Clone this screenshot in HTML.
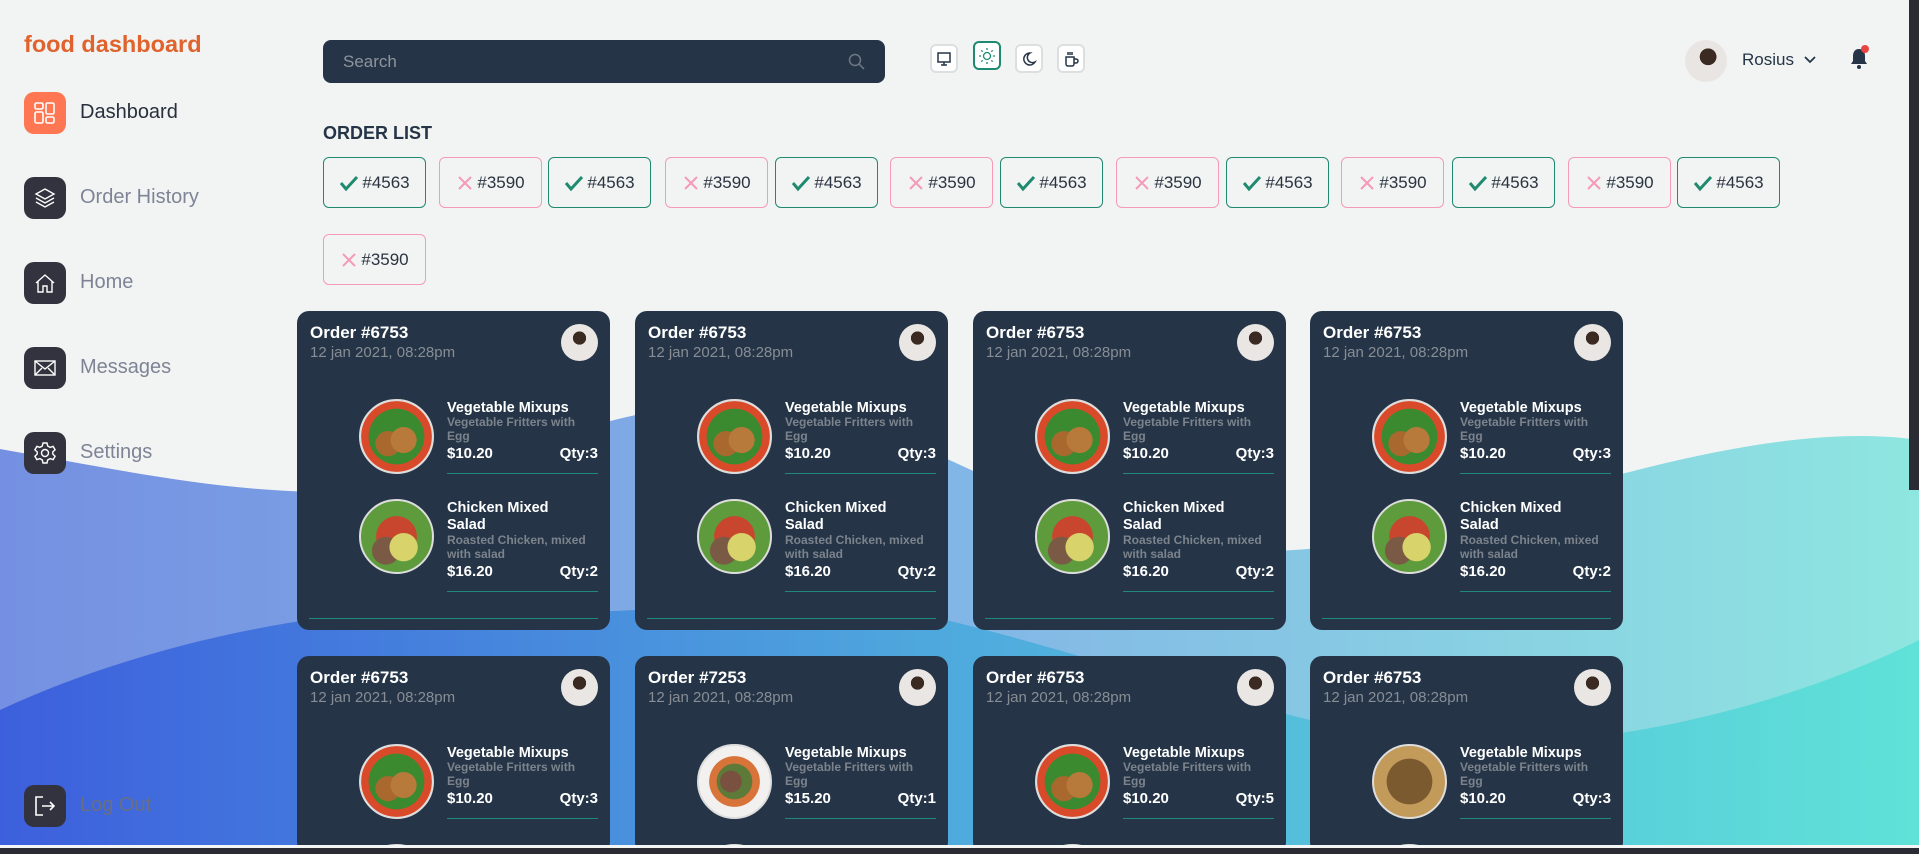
<!DOCTYPE html>
<html><head><meta charset="utf-8">
<style>
*{margin:0;padding:0;box-sizing:border-box}
html,body{width:1919px;height:854px;overflow:hidden}
body{background:#f2f4f3;font-family:"Liberation Sans",sans-serif;position:relative}
.abs{position:absolute}
.title{left:24px;top:31px;font-size:23.5px;font-weight:bold;color:#e0622c}
.nav{position:absolute;left:24px;width:42px;height:42px;border-radius:10px;background:#33333f;display:flex;align-items:center;justify-content:center}
.navt{position:absolute;left:80px;font-size:20px;color:#7e8496}
.search{left:323px;top:40px;width:562px;height:43px;border-radius:8px;background:#253547}
.search span{position:absolute;left:20px;top:12px;color:#8d949c;font-size:17px}
.ti{position:absolute;top:44px;width:28px;height:29px;border:2px solid #dcdfe0;border-radius:6px;background:#fff;display:flex;align-items:center;justify-content:center}
.chip{position:absolute;width:103px;height:51px;border-radius:6px;border:1.5px solid #1f8a70;display:flex;align-items:center;justify-content:center;font-size:17px;color:#2a3340;gap:3px}
.chip.x{border-color:#f59ab8}
.card{position:absolute;width:313px;height:319px;border-radius:12px;background:#253547;color:#fff;overflow:hidden}
.card .o{position:absolute;left:13px;top:12px;font-size:17px;font-weight:bold}
.card .d{position:absolute;left:13px;top:33px;font-size:15px;color:#878d95}
.card .av{position:absolute;right:12px;top:13px;width:37px;height:37px;border-radius:50%;background:radial-gradient(circle at 50% 38%,#3a2a22 0 22%,#e9e6e4 23% 100%)}
.food{position:absolute;left:62px;width:75px;height:75px;border-radius:50%;border:2px solid #ddd}
.f1{background:radial-gradient(circle at 60% 55%,#b87a3a 0 22%,transparent 23%),radial-gradient(circle at 38% 60%,#a8682e 0 20%,transparent 21%),radial-gradient(circle,#3c8a2f 0 55%,#d94a2a 56% 70%,#f1f1f1 71%)}
.f2{background:radial-gradient(circle at 60% 65%,#d8d36a 0 22%,transparent 23%),radial-gradient(circle at 35% 70%,#7a5a44 0 20%,transparent 21%),radial-gradient(circle,#c8452e 0 40%,#5d9b3c 41% 72%,#555 73%)}
.f3{background:radial-gradient(circle at 45% 50%,#7a5040 0 20%,transparent 21%),radial-gradient(circle,#5d7a38 0 35%,#d8733a 36% 50%,#f3f1ef 51%)}
.f4{background:radial-gradient(circle,#7a5a2e 0 45%,#c29a5a 46% 80%,#eee 81%)}
.n{position:absolute;left:150px;font-size:14.5px;font-weight:bold;line-height:17px;width:126px}
.s{position:absolute;left:150px;font-size:12px;color:#7c838c;line-height:14px;width:140px;font-weight:bold}
.p{position:absolute;left:150px;font-size:15px;font-weight:bold}
.q{position:absolute;right:12px;font-size:15px;font-weight:bold}
.l{position:absolute;left:150px;right:12px;height:1px;background:#1f8a7a}
.bl{position:absolute;left:12px;right:12px;top:307px;height:1px;background:#1f8a7a}
#bot{position:absolute;left:0;top:845px;width:1919px;height:9px;z-index:5}
</style></head><body>
<svg class="abs" style="left:0;top:0" width="1919" height="854">
<defs>
<linearGradient id="g1" x1="0" x2="1"><stop offset="0" stop-color="#7590e2"/><stop offset=".5" stop-color="#82b6e6"/><stop offset="1" stop-color="#8ee6e0"/></linearGradient>
<linearGradient id="g2" x1="0" x2="1"><stop offset="0" stop-color="#3d5fdd"/><stop offset=".5" stop-color="#4faadd"/><stop offset="1" stop-color="#5fe2d8"/></linearGradient>
</defs>
<path d="M0,449 C120,470 220,492 330,492 C480,490 560,410 720,405 C860,400 960,470 1080,520 C1180,560 1300,560 1420,530 C1600,480 1780,420 1919,440 L1919,854 L0,854Z" fill="url(#g1)"/>
<path d="M0,710 C150,640 350,600 500,610 C650,620 750,590 900,610 C1050,640 1200,700 1400,740 C1600,760 1800,700 1919,640 L1919,854 L0,854Z" fill="url(#g2)"/>
<rect x="1909" y="0" width="10" height="490" fill="#2b2b33"/>
</svg>

<div class="abs title">food dashboard</div>
<div class="nav" style="top:92px;background:#ff7652"><svg width="24" height="24" fill="none" stroke="#fff" stroke-width="1.6"><rect x="2" y="2" width="8" height="6" rx="1.5"/><rect x="2" y="11" width="8" height="11" rx="1.5"/><rect x="13" y="2" width="8" height="11" rx="1.5"/><rect x="13" y="16" width="8" height="6" rx="1.5"/></svg></div>
<div class="navt" style="top:101px;color:#27303c">Dashboard</div>
<div class="nav" style="top:177px"><svg width="22" height="22" fill="none" stroke="#fff" stroke-width="1.4"><path d="M11 2 L20 7 L11 12 L2 7Z"/><path d="M2 11 L11 16 L20 11"/><path d="M2 15 L11 20 L20 15"/></svg></div>
<div class="navt" style="top:186px">Order History</div>
<div class="nav" style="top:262px"><svg width="22" height="22" fill="none" stroke="#fff" stroke-width="1.4"><path d="M2 11 L11 3 L20 11 M4 9 V20 H9 V14 H13 V20 H18 V9"/></svg></div>
<div class="navt" style="top:271px">Home</div>
<div class="nav" style="top:347px"><svg width="24" height="20" fill="none" stroke="#fff" stroke-width="1.4"><rect x="2" y="3" width="20" height="14"/><path d="M2 3 L12 11 L22 3 M2 17 L9 10 M22 17 L15 10"/></svg></div>
<div class="navt" style="top:356px">Messages</div>
<div class="nav" style="top:432px"><svg width="24" height="24" fill="none" stroke="#fff" stroke-width="1.4"><circle cx="12" cy="12" r="3.5"/><path d="M10 2h4l.7 3 2.4 1.4 3-1 2 3.4-2.3 2.1v2.2l2.3 2.1-2 3.4-3-1-2.4 1.4-.7 3h-4l-.7-3-2.4-1.4-3 1-2-3.4 2.3-2.1v-2.2L1.9 8.8l2-3.4 3 1L9.3 5z"/></svg></div>
<div class="navt" style="top:441px">Settings</div>
<div class="nav" style="top:785px"><svg width="24" height="24" fill="none" stroke="#fff" stroke-width="1.6"><path d="M10 3H3V21H10 M9 12H21 M17 8l4 4-4 4"/></svg></div>
<div class="navt" style="top:794px;color:#6a6f80">Log Out</div>

<div class="abs search"><span>Search</span><svg class="abs" style="right:20px;top:13px" width="17" height="17" fill="none" stroke="#6e7985" stroke-width="1.5"><circle cx="7" cy="7" r="5.5"/><path d="M11 11l5 5"/></svg></div>

<div class="ti" style="left:930px"><svg width="16" height="16" fill="none" stroke="#253547" stroke-width="1.5"><rect x="2" y="2" width="12" height="9"/><path d="M8 11v3M5 14h6"/></svg></div>
<div class="ti" style="left:973px;top:41px;border-color:#1f8a70"><svg width="18" height="18" fill="none" stroke="#1f8a70" stroke-width="1.3"><circle cx="9" cy="9" r="3.5"/><path d="M9 1v2M9 15v2M1 9h2M15 9h2M3.3 3.3l1.4 1.4M13.3 13.3l1.4 1.4M3.3 14.7l1.4-1.4M13.3 4.7l1.4-1.4"/></svg></div>
<div class="ti" style="left:1015px"><svg width="16" height="16" fill="none" stroke="#253547" stroke-width="1.5"><path d="M9 2a6 6 0 1 0 5 9A5 5 0 0 1 9 2z"/></svg></div>
<div class="ti" style="left:1057px"><svg width="16" height="18" fill="none" stroke="#253547" stroke-width="1.5"><path d="M3 7h8v7a2 2 0 0 1-2 2H5a2 2 0 0 1-2-2z M11 9h2a2 2 0 0 1 0 4h-2 M5 2v3M7 2v3M9 2v3"/></svg></div>

<div class="abs" style="left:1685px;top:40px;width:42px;height:42px;border-radius:50%;background:radial-gradient(circle at 55% 40%,#3a2a22 0 24%,#e8e5e3 25%)"></div>
<div class="abs" style="left:1742px;top:50px;font-size:17px;color:#253547">Rosius</div>
<svg class="abs" style="left:1804px;top:55px" width="12" height="10" fill="none" stroke="#253547" stroke-width="1.8"><path d="M1 2l5 5 5-5"/></svg>
<svg class="abs" style="left:1848px;top:44px" width="22" height="28"><path d="M11 5c-4 0-6 3-6 7v5l-2 3h16l-2-3v-5c0-4-2-7-6-7z" fill="#253547"/><circle cx="11" cy="23" r="2" fill="#253547"/><circle cx="17" cy="5" r="4" fill="#e84444"/></svg>

<div class="abs" style="left:323px;top:123px;font-size:18px;font-weight:bold;color:#253547">ORDER LIST</div>

<div id="chips"></div>
<div id="cards"></div>
<div id="bot"><div style="height:3px;background:#f4f5f5"></div><div style="height:6px;background:#2b2b33"></div></div>
<script>
var xs=[323,439,548,665,775,890,1000,1116,1226,1341,1452,1568,1677],h='';
var ck='<svg width="20" height="18" fill="none" stroke="#1f8a70" stroke-width="3"><path d="M2 9l5 6L18 3"/></svg>';
var cx='<svg width="18" height="18" fill="none" stroke="#f59ab8" stroke-width="2"><path d="M3 3l12 12M15 3L3 15"/></svg>';
xs.forEach(function(x,i){var c=i%2==0;h+='<div class="chip'+(c?'':' x')+'" style="left:'+x+'px;top:157px">'+(c?ck+'#4563':cx+'#3590')+'</div>';});
h+='<div class="chip x" style="left:323px;top:234px">'+cx+'#3590</div>';
document.getElementById('chips').innerHTML=h;
var cols=[297,635,973,1310],c='';
function card(x,y,ord,f1,p1,q1,hh){return '<div class="card" style="left:'+x+'px;top:'+y+'px;height:'+hh+'px"><div class="o">Order #'+ord+'</div><div class="d">12 jan 2021, 08:28pm</div><div class="av"></div>'+
'<div class="food '+f1+'" style="top:88px"></div><div class="n" style="top:89px">Vegetable Mixups</div><div class="s" style="top:104px">Vegetable Fritters with Egg</div><div class="p" style="top:134px">'+p1+'</div><div class="q" style="top:134px">Qty:'+q1+'</div><div class="l" style="top:162px"></div>'+
'<div class="food f2" style="top:188px"></div><div class="n" style="top:189px">Chicken Mixed Salad</div><div class="s" style="top:222px">Roasted Chicken, mixed with salad</div><div class="p" style="top:252px">$16.20</div><div class="q" style="top:252px">Qty:2</div><div class="l" style="top:280px"></div><div class="bl"></div></div>';}
cols.forEach(function(x){c+=card(x,311,'6753','f1','$10.20',3,319);});
c+=card(297,656,'6753','f1','$10.20',3,198)+card(635,656,'7253','f3','$15.20',1,198)+card(973,656,'6753','f1','$10.20',5,198)+card(1310,656,'6753','f4','$10.20',3,198);
document.getElementById('cards').innerHTML=c;
</script>
</body></html>
